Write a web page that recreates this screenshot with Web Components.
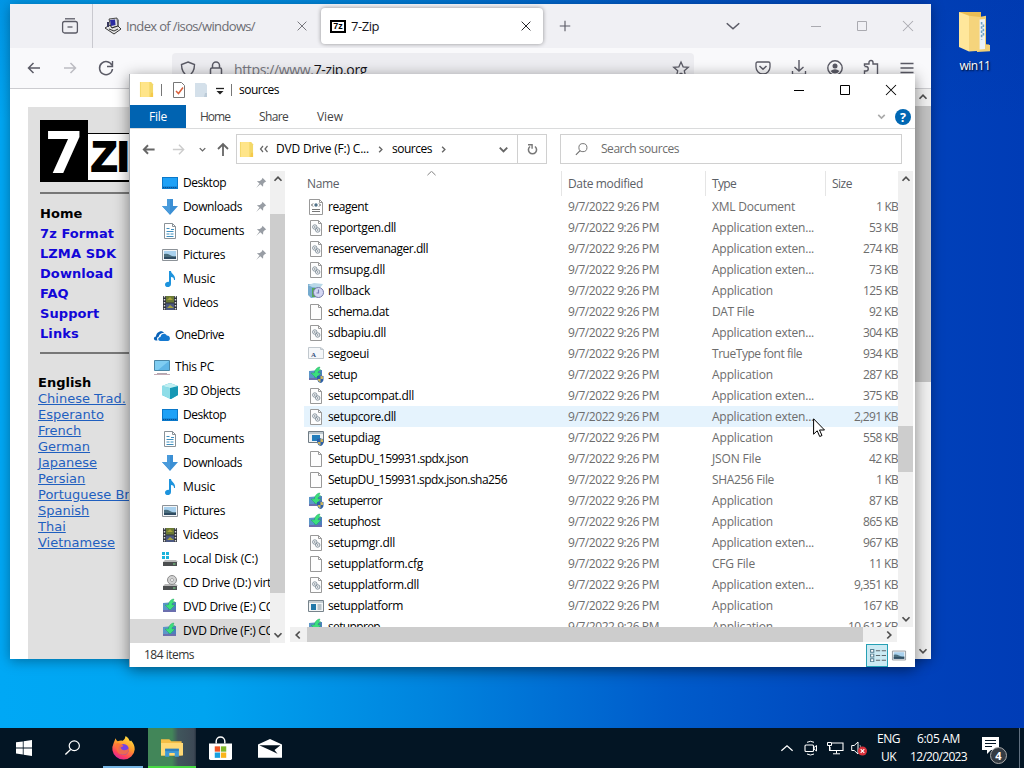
<!DOCTYPE html>
<html lang="en">
<head>
<meta charset="utf-8">
<title>Desktop</title>
<style>
html, body { margin: 0; height: 100%; overflow: hidden; }
body { font: 12px/16px "Open Sans", "Noto Sans", sans-serif; color: #000; }
</style>
</head>
<body>
<win-desktop></win-desktop>

<script>
const folder = `<path d="M1 1h12l2 2v12H1z" fill="#f3d869"/><path d="M2 1h9v14H2z" fill="#ffe58a"/><path d="M13 11h2v4h-3z" fill="#f6c94a"/>`
const page = `<path d="M2.5.5h8l3 3v12h-11z" fill="#fdfdfd" stroke="#999"/><path d="M10.500.5v3h3" fill="none" stroke="#999"/>`
const box = `<path d="M1 4l13-1v9L1 12z" fill="#4d7fbd"/><path d="M1 4h5v8H1z" fill="#5b96c8"/><path d="M1 11h13v2H1z" fill="#6b6fae"/><path d="M8 11L3 6h3.300C7 2.500 9 0 12 0l-1 2.500L13 3c-2 .5-3 1.200-3 3h3z" fill="#3be07d" stroke="#1f9e5c" stroke-width=".4"/>`
const shield = `<path d="M9 9q3 0 3.500-1 .5 1 3 1v3q0 3-3 4-3-1-3.500-4z" fill="#2c5fa8"/><path d="M12.500 8.500q.5.7 2.500 1V12h-2.500zM9.500 12h3v3.500q-2.700-1-3-3.500z" fill="#cdb55c"/>`
const drive = `<path d="M3 9h11l2 2H1z" fill="#b9b9b9"/><path d="M1 11h14v4H1z" fill="#4c4f50"/><path d="M11 13h2.500" stroke="#7ee08c"/>`
const chev = (d, w = 2) => `<path d="${d}" fill="none" stroke="currentColor" stroke-width="${w}"/>`

const ICONS = {
    folder,
    folderFaded: `<path d="M2 1h10l2 2v12H2z" fill="#d4e0ea"/><path d="M12 11h2v4h-3z" fill="#bccbd8"/>`,
    check: `<path d="M2.500.5h8l3 3v12h-11z" fill="#fff" stroke="#777"/><path d="M5 9l2.500 2.500L12 5.500" fill="none" stroke="#d9603b" stroke-width="1.500"/>`,
    qat: `<path d="M4 5.500h8" stroke="#222" stroke-width="1.300"/><path d="M4.500 8h7L8 11.500z" fill="#222"/>`,
    desktop: `<path d="M0 2h16v12H0z" fill="#0b78c9"/><path d="M1 3h14v8.500H1z" fill="#1ea1f7"/><path d="M1 12.500h14" stroke="#0a4f92" stroke-dasharray="1 1"/>`,
    downloads: `<path d="M5 0h6v7h5l-8 9-8-9h5z" fill="#3b8fd4"/><path d="M5 0h3v15L0 7h5z" fill="#4a9bdb"/>`,
    documents: `<path d="M2.500.5h8l3 3v12h-11z" fill="#fff" stroke="#8a9298"/><path d="M10.500.5v3h3" fill="none" stroke="#8a9298"/><path d="M4.500 5.500h3M9 6.500h3M4.500 8.500h7M4.500 11h3M8.500 11h3M4.500 13.500h7" stroke="#3f8fbe"/>`,
    pictures: `<path d="M.5 2.500h15v11H.5z" fill="#f4f6f8" stroke="#8c9298"/><path d="M2 4h12v8H2z" fill="#a9d1ee"/><path d="M2 7q3-1 6 1t6 1v3H2z" fill="#4b6e7e"/><path d="M2 10h12v2H2z" fill="#2e4b62"/>`,
    music: `<path d="M7 0h2c0 3 5 4 4 9h-1c0-2-1-3-3-3v7c0 4-6 4-6 .8C3 11 6 10.500 7 11z" fill="#1d93dd"/>`,
    videos: `<path d="M1 1h14v14H1z" fill="#30343c"/><path d="M4 1h8v6.500H4z" fill="#6b7a35"/><path d="M4 8.500h8V15H4z" fill="#4b5880"/><path d="M5 5l3-3 3 3zM5 13l3-3 4 3z" fill="#a7a33c"/><path d="M2.500 1v14M13.500 1v14" stroke="#dedede" stroke-width="1.400" stroke-dasharray="1.500 1.500"/>`,
    onedrive: `<path d="M2 13.500c-3-.5-2.500-4 0-4C2 5 8 2 10 6c-4 0-5 2-5 3.500-2 .5-2.500 2-1.500 4z" fill="#0a62b8"/><path d="M6.500 14c-3 0-3-4 0-4 .2-3.500 5-4.500 6.300-1.500 4 0 4 5.500 1 5.500z" fill="#1579d0"/>`,
    pc: `<path d="M.5 1.500h15v10H.5z" fill="#7fcdf2" stroke="#4b87a6"/><path d="M15 2v9H4z" fill="#5fb6e6"/><path d="M3 14.500h10" stroke="#b0a7b0"/><path d="M0 15.500h16" stroke="#c3aab4"/>`,
    cube: `<path d="M0 3l8-3 8 3v9l-7 4-9-4z" fill="#39b7cf"/><path d="M0 3l8 2v11l-8-4z" fill="#8edde8"/><path d="M8 5l8-2v9l-7 4H8z" fill="#1697b4"/><path d="M0 3l8-3 8 3-8 2z" fill="#c1eff2"/>`,
    disk: drive + `<path d="M0 1h3v3H0zM4 1h3v3H4zM0 5h3v3H0zM4 5h3v3H4z" fill="#1cb4dc"/>`,
    cd: drive + `<circle cx="10" cy="5" r="4.500" fill="#d2d2d2" stroke="#8c8c8c"/><circle cx="10" cy="5" r="1.500" fill="#fff" stroke="#8c8c8c" stroke-width=".7"/>`,
    box,
    setup: box + shield,
    file: page,
    dll: page + `<g fill="none" stroke="#7d8b96" stroke-width=".9"><circle cx="6.800" cy="7" r="2.200"/><circle cx="6.800" cy="7" r=".5"/><circle cx="9.700" cy="10" r="2.200"/><circle cx="9.700" cy="10" r=".5"/></g>`,
    xml: `<path d="M1.500.5h10l3 3v12h-13z" fill="#fff" stroke="#999"/><path d="M11.500.5v3h3" fill="none" stroke="#999"/><path d="M5 4.500L3.500 6 5 7.500M11 4.500L12.500 6 11 7.500" stroke="#555" fill="none"/><circle cx="8" cy="6" r="1.700" fill="#4f7188"/><path d="M4 10.500h8M4 12.500h8" stroke="#777"/>`,
    rollback: `<path d="M0 1h11v13l-8 1-3-3z" fill="#75aace"/><path d="M4 5h6v9H4z" fill="#58a85a"/><path d="M0 2l6-2 9 1-3 4-8-1z" fill="#b9d8e8"/><circle cx="10.500" cy="9.500" r="5" fill="#d3d7f3" stroke="#777cab"/><path d="M10.500 6.500v3.500H8.500" stroke="#7a80b8" fill="none" stroke-width="1.200"/>`,
    font: `<path d="M.5 1.500h12l3 2v9H.5z" fill="#f5f7f9" stroke="#c1c8ce"/><path d="M12.500 1.500v2h3" fill="none" stroke="#c1c8ce"/><text x="3" y="10.500" font-size="7" font-weight="700" font-family="Liberation Serif, serif" fill="#35507c">A</text>`,
    diag: `<path d="M.5 1.500h15v11H.5z" fill="#eef2f4" stroke="#6f7b84"/><path d="M1 2h14v2H1z" fill="#bcc8cf"/><path d="M4 5h8v6H4z" fill="#237dbb"/>` + shield,
    platform: `<path d="M.5 2.500h15v11H.5z" fill="#f2f5f6" stroke="#77838b"/><path d="M1 3h14v2H1z" fill="#c3ccd1"/><path d="M3 6h5v6H3z" fill="#2077a8"/><path d="M9.500 7h4M9.500 9h4M9.500 11h4" stroke="#81929c"/>`,
    pin: `<path d="M10 1l5 5-1.700.5-2.300 2.500-.3 4L7 9.500 1.500 14.500 6 8.700 2.500 5.500l4-.3L9.300 3z" fill="#989da4"/>`,
    left: `<path d="M14 8H2.500M7.500 3l-5 5 5 5" fill="none" stroke="currentColor" stroke-width="1.500"/>`,
    boldLeft: `<path d="M14.500 8H3M7.500 3.500L3 8l4.500 4.500" fill="none" stroke="currentColor" stroke-width="2"/>`,
    right: `<path d="M2 8h11.500M8.500 3l5 5-5 5" fill="none" stroke="currentColor" stroke-width="1.500"/>`,
    up: `<path d="M8 15V3M3 8l5-5 5 5" fill="none" stroke="currentColor" stroke-width="1.800"/>`,
    chevUp: chev('M4 10l4-4 4 4'),
    chevDown: chev('M4 6l4 4 4-4'),
    listTabs: chev('M3 5.500l5 5 5-5', 1.2),
    chevLeft: chev('M10 4L6 8l4 4'),
    chevRight: chev('M6 4l4 4-4 4'),
    thinUp: chev('M3 10.500L8 6l5 4.500', 1.1),
    dblLeft: `<path d="M7 5L4.500 8 7 11M11.500 5L9 8l2.500 3" fill="none" stroke="currentColor" stroke-width="1.200"/>`,
    refresh: `<path d="M11 4.300A5 5 0 1 1 5 4.300" fill="none" stroke="currentColor" stroke-width="1.900"/><path d="M2.500 2.200h5v5" fill="none" stroke="currentColor" stroke-width="1.700"/>`,
    search: `<circle cx="9.500" cy="6" r="4.300" fill="none" stroke="currentColor"/><path d="M6.500 9.200L2 13.800" stroke="currentColor" stroke-width="1.200"/>`,
    min: `<path d="M3 8.500h10" stroke="currentColor"/>`,
    max: `<path d="M3.500 3.500h9v9h-9z" fill="none" stroke="currentColor"/>`,
    close: `<path d="M3 3l10 10M13 3L3 13" stroke="currentColor" stroke-width="1.050"/>`,
    plus: `<path d="M8 2v12M2 8h12" stroke="currentColor" stroke-width="1.300"/>`,
    help: `<circle cx="8" cy="8" r="8" fill="#0067b3"/><text x="8" y="12.500" text-anchor="middle" font-size="12.500" font-weight="700" fill="#fff">?</text>`,
    recent: `<path d="M3 .8h10" stroke="currentColor" stroke-width="1.300"/><rect x=".6" y="3.500" width="14.800" height="11.500" rx="2" fill="none" stroke="currentColor" stroke-width="1.300"/><path d="M5.500 9h5" stroke="currentColor" stroke-width="1.300"/>`,
    reload: `<path d="M14 5.500A6.500 6.500 0 1 0 14.500 9" fill="none" stroke="currentColor" stroke-width="1.500"/><path d="M14.500 1v5.500H9" fill="none" stroke="currentColor" stroke-width="1.400"/>`,
    guard: `<path d="M8 1l6.500 2.500c0 6-2 9.500-6.500 12-4.500-2.500-6.500-6-6.500-12z" fill="none" stroke="currentColor" stroke-width="1.400"/>`,
    lock: `<path d="M4.500 7V4.500a3.500 3.500 0 0 1 7 0V7" fill="none" stroke="currentColor" stroke-width="1.500"/><rect x="2.500" y="7" width="11" height="8.500" rx="1.500" fill="none" stroke="currentColor" stroke-width="1.500"/>`,
    star: `<path d="M8 1l2.100 4.800 5.200.5-4 3.500 1.200 5.200L8 12.300 3.500 15l1.200-5.200-4-3.500 5.200-.5z" fill="none" stroke="currentColor" stroke-width="1.300"/>`,
    pocket: `<path d="M2.500 2h11q1.500 0 1.500 1.500V7A7 7 0 0 1 1 7V3.500Q1 2 2.500 2z" fill="none" stroke="currentColor" stroke-width="1.300"/><path d="M4.500 6L8 9.300 11.500 6" fill="none" stroke="currentColor" stroke-width="1.500"/>`,
    save: `<path d="M8 0v11M3.500 7L8 11l4.500-4M1.500 11v3.500h13V11" fill="none" stroke="currentColor" stroke-width="1.400"/>`,
    user: `<circle cx="8" cy="8" r="7.200" fill="none" stroke="currentColor" stroke-width="1.400"/><circle cx="8" cy="6" r="2.500" fill="currentColor"/><path d="M3.500 11q4.500-3.500 9 0-2 2.500-4.500 2.500T3.500 11z" fill="currentColor"/>`,
    puzzle: `<path d="M1.500 6V4H6V2.500a2 2 0 0 1 4 0V4h4.500v11M1.500 6.500H3a2 2 0 0 1 0 4.500H1.500v4" fill="none" stroke="currentColor" stroke-width="1.400"/>`,
    menu: `<path d="M1.500 3.500h13M1.500 8h13M1.500 12.500h13" stroke="currentColor" stroke-width="1.300"/>`,
    apache: `<path d="M4 1l8-1 1 8-7 2z" fill="#ddd" stroke="#222" stroke-width=".8"/><path d="M5 2l5-.5.5 5.500L6 8z" fill="#2a2ba0"/><path d="M12 0l2 2v6l-1 1z" fill="#777"/><path d="M0 10l5-3 2 3 6-2 3 3-7 5z" fill="#e3e3e3" stroke="#222" stroke-width=".9"/><path d="M4 11l5 2 4-2" stroke="#333" fill="none"/><path d="M2 4h2v5H2z" fill="#37375c"/>`,
    details: `<path d="M1.500 1.500h3v3h-3zM1.500 6.500h3v3h-3zM1.500 11.500h3v3h-3z" fill="#fff" stroke="#557e91"/><path d="M6.500 3h4M12 3h4M6.500 8h4M12 8h4M6.500 13h4M12 13h4" stroke="#5d666b"/>`,
    start: `<path d="M0 2.300L6.800 1.400v6.100H0zM7.600 1.300L16 0v7.500H7.600zM0 8.400h6.800v6.200L0 13.600zM7.600 8.400H16V16l-8.400-1.200z" fill="#fff"/>`,
    firefox: `<defs><linearGradient id="fx" x1=".8" y1="0" x2=".3" y2="1"><stop stop-color="#ffe844"/><stop offset=".45" stop-color="#ff9a2b"/><stop offset=".8" stop-color="#ff405f"/><stop offset="1" stop-color="#d927a0"/></linearGradient></defs><path d="M1.200 4.500Q2 2.500 2.500 1.500 3 3 4 3.500 6 2.800 7.500 3.200 9 2.500 9.500 0q2 1 3 3.500L13.300 3Q16 6 15.800 9a7.800 7.200 0 0 1-15.500.5Q0 7 1.200 4.500z" fill="url(#fx)"/><circle cx="8" cy="9" r="3.700" fill="#7542e5"/><path d="M3 5q2.500-.5 5 1.500-1 1-2 1 .5 2 2.500 2 2 0 3.500-1.500-.5 5-5 4.500Q3.500 12 3 8z" fill="#ff7139" opacity=".85"/>`,
    explorer: `<path d="M0 1h6l1.500 1.500H15V14H0z" fill="#f5bf45"/><path d="M0 4h16v10H0z" fill="#ffd975"/><path d="M3 9h10v6h-3v-3H6v3H3z" fill="#3f9ad6"/><path d="M3 8.500h10v2H3z" fill="#2d7fbe"/>`,
    store: `<path d="M5 4.500V3a3 3 0 0 1 6 0v1.500" fill="none" stroke="#fff"/><path d="M0 4.500h16V15q0 1-1 1H1q-1 0-1-1z" fill="#fff"/><path d="M4 6.500h3.700v3.700H4z" fill="#ef5425"/><path d="M8.300 6.500H12v3.700H8.300z" fill="#7db728"/><path d="M4 10.800h3.700v3.700H4z" fill="#18a1df"/><path d="M8.300 10.800H12v3.700H8.300z" fill="#fab51c"/>`,
    mail: `<path d="M0 5l8-4.200L16 5v10H0z" fill="#fff"/><path d="M.8 5.500H15L11 9.200l2 2.800-4.500-2.500z" fill="#04131f"/>`,
    meet: `<rect x="2" y="5" width="8.500" height="6.500" rx="1" fill="none" stroke="#fff" stroke-width="1.100"/><path d="M11 7.500l2.500-2v5.500L11 9zM4 2.300q3.500-2 7 0M4 14q3.500 2 7 0" fill="none" stroke="#fff"/>`,
    network: `<path d="M5 3h11v7.500H3V7" fill="none" stroke="#fff" stroke-width="1.100"/><path d="M9.500 10.500v3M6 13.800h7M.5 2.500h4v3h-4zM2.500 5.500V11" fill="none" stroke="#fff"/>`,
    sound: `<path d="M.7 5.500h2.500L7 2v12l-3.800-3.500H.7z" fill="none" stroke="#fff"/><path d="M9 5q1.500 3 0 6" fill="none" stroke="#999"/><circle cx="11.500" cy="11" r="4.500" fill="#d9303a"/><path d="M9.700 9.200l3.600 3.600M13.300 9.200l-3.600 3.600" stroke="#fff" stroke-width="1.100"/>`,
    bigFolder: `<path d="M0 0h11v2h2.500v11H15v2.500h-3L6 15z" fill="#e8bd55"/><path d="M7 2.500l6.500-1V13l2 .2v2.500L9 16z" fill="#f1cf74"/><path d="M0 0l5 1.500v14.300L0 14z" fill="#ffe79b"/><path d="M5 1.500l5.500.5v13.500L5 15.800z" fill="#f5d47c"/><path d="M10.300 3l2.700-.2v12l-2.700.2z" fill="#edf3f6"/><path d="M11.300 4v7M12.200 5v5" stroke="#6ca4c8" stroke-width=".8" stroke-dasharray="1 .7"/>`
}

// inline svg by name
class UiIcon extends HTMLElement {
    constructor() {
        super()
        const w = this.getAttribute('w') || this.getAttribute('size') || 16
        const h = this.getAttribute('h') || this.getAttribute('size') || 16
        this.attachShadow({ mode: 'open' }).innerHTML = `
        <style>
        :host { display: inline-flex; flex: none; }
        svg { display: block; overflow: visible; }
        </style>
        <svg width="${w}" height="${h}" viewBox="0 0 16 16" preserveAspectRatio="none">${ICONS[this.getAttribute('name')]}</svg>`
    }
}

// one line of text, tracked so that it takes up exactly w pixels
class FitText extends HTMLElement {
    constructor() {
        super()
        this.attachShadow({ mode: 'open' }).innerHTML = `
        <style>
        :host { display: inline-block; flex: none; white-space: nowrap; }
        span { display: inline-block; }
        </style>
        <span><slot></slot></span>`
    }
    connectedCallback() {
        const w = Number(this.getAttribute('w'))
        if (!w) return
        const span = this.shadowRoot.querySelector('span')
        const natural = span.getBoundingClientRect().width
        span.style.letterSpacing = (w - natural) / this.textContent.length + 'px'
    }
}

// vertical or horizontal bar, from = thumb offset, len = thumb length
class ScrollBar extends HTMLElement {
    constructor() {
        super()
        const across = this.hasAttribute('across')
        const bg = this.getAttribute('thumb') || '#cdcdcd'
        this.attachShadow({ mode: 'open' }).innerHTML = `
        <style>
        :host { display: flex; flex: none; flex-direction: ${across ? 'row' : 'column'}; align-items: center; background: #f0f0f0; color: #505050; }
        .thumb { flex: none; background: ${bg}; align-self: stretch; ${across ? 'width' : 'height'}: ${this.getAttribute('len')}px; }
        .gap { flex: 0 0 ${this.getAttribute('from')}px; display: flex; align-items: ${across ? 'center' : 'flex-start'}; }
        .rest { flex: 1; display: flex; ${across ? 'justify-content: flex-end; align-items: center' : 'align-items: flex-end'}; }
        ui-icon { margin: 1px; }
        </style>
        <div class="gap"><ui-icon name="${across ? 'chevLeft' : 'chevUp'}" size="14"></ui-icon></div>
        <div class="thumb"></div>
        <div class="rest"><ui-icon name="${across ? 'chevRight' : 'chevDown'}" size="14"></ui-icon></div>`
    }
}

class BrowserTab extends HTMLElement {
    constructor() {
        super()
        this.attachShadow({ mode: 'open' }).innerHTML = `
        <style>
        :host { display: flex; align-items: center; height: 36px; padding: 0 9px; box-sizing: border-box; font-size: 13px; color: #6c6c72; }
        :host([active]) { background: #fff; border-radius: 4px; box-shadow: 0 0 4px rgba(0,0,0,.4); color: #15141a; }
        .label { flex: 1; margin-left: 5px; }
        </style>
        <slot name="icon"></slot>
        <div class="label"><slot></slot></div>
        <ui-icon name="close" size="14"></ui-icon>`
    }
}

class BrowserWindow extends HTMLElement {
    constructor() {
        super()
        const langs = ['Chinese Trad.', 'Esperanto', 'French', 'German', 'Japanese', 'Persian', 'Portuguese Brazil', 'Spanish', 'Thai', 'Vietnamese']
        const menu = ['7z Format', 'LZMA SDK', 'Download', 'FAQ', 'Support', 'Links']
        this.attachShadow({ mode: 'open' }).innerHTML = `
        <style>
        :host { display: flex; flex-direction: column; background: #fff; box-shadow: 0 2px 12px rgba(0,0,0,.35); overflow: hidden; color: #5b5b66; }
        .tabs { display: flex; align-items: center; height: 44px; background: #f0f0f4; }
        .recent { width: 83px; height: 44px; box-sizing: border-box; border-right: 1px solid #c9c9cf; display: flex; align-items: center; justify-content: flex-end; padding-right: 14px; }
        .t1 { width: 225px; margin: 0 2px 0 2px; padding-left: 11px; padding-right: 11px; }
        .t2 { width: 222px; padding-right: 10px; margin-left: -1px; }
        .fav { display: flex; width: 14px; height: 11px; background: #fff; border: 1px solid #000; align-items: center; font: bold 9px/9px "Liberation Sans", sans-serif; color: #000; outline: 1px solid #000; outline-offset: -2px; justify-content: center; }
        .plus { margin-left: 15px; }
        .list { margin-left: 151px; }
        .ctl { display: flex; margin-left: auto; gap: 30px; padding-right: 15px; color: #aaaab0; }
        .nav { display: flex; align-items: center; height: 40px; background: #f9f9fb; border-bottom: 1px solid #ccccd0; padding: 0 16px; }
        .nav > ui-icon + ui-icon { margin-left: 20px; }
        .url { flex: none; width: 522px; height: 34px; margin: 4px 0 0 58px; background: #ededf1; border-radius: 4px; display: flex; align-items: center; font-size: 14px; padding-left: 8px; box-sizing: border-box; color: #77777f; }
        .url ui-icon { color: #5b5b66; margin-bottom: 2px; }
        .url b { font-weight: 400; color: #15141a; }
        .tools { display: flex; gap: 20px; margin-left: auto; }
        .view { display: flex; flex: 1; min-height: 0; }
        .page { flex: 1; padding: 18px 0 0 18px; }
        .side { background: #e0e0e0; height: 100%; padding: 13px 10px 0 12px; box-sizing: border-box; width: 150px; font: 13px/16px "DejaVu Sans", Verdana, sans-serif; letter-spacing: .08px; }
        .logo { display: flex; height: 62px; width: 180px; align-items: flex-end; }
        .seven { width: 48px; height: 62px; background: #000; color: #fff; font: bold 57px/66px "DejaVu Sans", sans-serif; text-align: center; flex: none; }
        .zip { flex: 1; height: 49px; border: 2px solid #000; border-top-width: 1px; border-left: 0; box-sizing: border-box; background: #fff; color: #000; font: bold 43px/44px "Liberation Sans", sans-serif; padding-left: 3px; -webkit-text-stroke: 2px #000; }
        .rule { height: 2px; background: #777; margin: 10px -20px 10px 0; }
        .menu { font-weight: 700; line-height: 20px; color: #1207d8; }
        .menu div:first-child { color: #000; }
        .langs { margin: 21px 0 0 -2px; white-space: nowrap; color: #1f5fbf; }
        .langs b { color: #000; display: block; letter-spacing: 0; }
        .langs div { text-decoration: underline; letter-spacing: 0; }
        scroll-bar { width: 16px; }
        </style>
        <div class="tabs">
            <div class="recent"><ui-icon name="recent" size="16"></ui-icon></div>
            <browser-tab class="t1"><ui-icon slot="icon" name="apache" size="16" style="margin-left:-1px"></ui-icon><fit-text w="129">Index of /isos/windows/</fit-text></browser-tab>
            <browser-tab class="t2" active><div class="fav" slot="icon">7z</div><fit-text w="28">7-Zip</fit-text></browser-tab>
            <ui-icon class="plus" name="plus" size="14"></ui-icon>
            <ui-icon class="list" name="listTabs" w="20" h="18"></ui-icon>
            <div class="ctl"><ui-icon name="min" size="16"></ui-icon><ui-icon name="max" size="16"></ui-icon><ui-icon name="close" size="16"></ui-icon></div>
        </div>
        <div class="nav">
            <ui-icon name="left"></ui-icon><ui-icon name="right" style="color:#bcbcc2"></ui-icon><ui-icon name="reload"></ui-icon>
            <div class="url">
                <ui-icon name="guard"></ui-icon><ui-icon name="lock" style="margin:0 10px 2px 12px" ></ui-icon>
                <fit-text w="133">https://www.<b>7-zip.org</b></fit-text>
                <ui-icon name="star" style="margin-left:auto;margin-right:5px"></ui-icon>
            </div>
            <div class="tools"><ui-icon name="pocket"></ui-icon><ui-icon name="save"></ui-icon><ui-icon name="user"></ui-icon><ui-icon name="puzzle"></ui-icon><ui-icon name="menu"></ui-icon></div>
        </div>
        <div class="view">
            <div class="page"><div class="side">
                <div class="logo"><div class="seven">7</div><div class="zip">ZIP</div></div>
                <div class="rule"></div>
                <div class="menu"><div>Home</div>${menu.map(m => `<div>${m}</div>`).join('')}</div>
                <div class="rule" style="margin-top:8px"></div>
                <div class="langs"><b>English</b>${langs.map(l => `<div>${l}</div>`).join('')}</div>
            </div></div>
            <scroll-bar from="17" len="276" thumb="#c2c2c2"></scroll-bar>
        </div>`
    }
}

class TreeItem extends HTMLElement {
    constructor() {
        super()
        this.attachShadow({ mode: 'open' }).innerHTML = `
        <style>
        :host { display: flex; align-items: center; height: 24px; padding-left: 32px; white-space: nowrap; overflow: hidden; }
        :host([root]) { padding-left: 24px; margin-top: 8px; }
        :host([selected]) { background: #d9d9d9; }
        .label { flex: 1; margin-left: 5px; overflow: hidden; }
        </style>
        <ui-icon name="${this.getAttribute('icon')}"></ui-icon>
        <div class="label"><slot></slot></div>
        ${this.hasAttribute('pinned') ? '<ui-icon name="pin" size="12" style="margin-right:3px"></ui-icon>' : ''}`
    }
}

class FileRow extends HTMLElement {
    constructor() {
        super()
        this.attachShadow({ mode: 'open' }).innerHTML = `
        <style>
        :host { display: grid; grid-template-columns: 257px 144px 120px 73px; height: 21px; align-items: center; color: #6d6d6d; white-space: nowrap; }
        :host([hover]) { background: #e5f3fd; }
        .name { display: flex; gap: 4px; padding-left: 4px; color: #000; }
        .cell { padding-left: 7px; }
        .size { text-align: right; }
        </style>
        <div class="name"><ui-icon name="${this.getAttribute('icon')}"></ui-icon><slot name="name"></slot></div>
        <div class="cell"><slot name="date"></slot></div>
        <div class="cell"><slot name="type"></slot></div>
        <div class="size"><slot name="size"></slot></div>`
    }
}

const TYPES = { x: ['Application exten...', 102], a: ['Application', 61], xml: ['XML Document', 83], dat: ['DAT File', 42], ttf: ['TrueType font file', 90], json: ['JSON File', 49], sha: ['SHA256 File', 62], cfg: ['CFG File', 43] }
// icon, name, name width, type, size
const FILES = [
    ['xml', 'reagent', 40, 'xml', '1'],
    ['dll', 'reportgen.dll', 68, 'x', '53'],
    ['dll', 'reservemanager.dll', 100, 'x', '274'],
    ['dll', 'rmsupg.dll', 57, 'x', '73'],
    ['rollback', 'rollback', 42, 'a', '125'],
    ['file', 'schema.dat', 61, 'dat', '92'],
    ['dll', 'sdbapiu.dll', 58, 'x', '304'],
    ['font', 'segoeui', 41, 'ttf', '934'],
    ['setup', 'setup', 29, 'a', '287'],
    ['dll', 'setupcompat.dll', 86, 'x', '375'],
    ['dll', 'setupcore.dll', 68, 'x', '2,291'],
    ['diag', 'setupdiag', 52, 'a', '558'],
    ['file', 'SetupDU_159931.spdx.json', 140, 'json', '42'],
    ['file', 'SetupDU_159931.spdx.json.sha256', 179, 'sha', '1'],
    ['setup', 'setuperror', 54, 'a', '87'],
    ['box', 'setuphost', 52, 'a', '865'],
    ['dll', 'setupmgr.dll', 67, 'x', '967'],
    ['file', 'setupplatform.cfg', 95, 'cfg', '11'],
    ['dll', 'setupplatform.dll', 91, 'x', '9,351'],
    ['platform', 'setupplatform', 75, 'a', '167'],
    ['box', 'setupprep', 52, 'a', '10,613']
]
// text width by number of characters in the size
const SIZE_W = { 1: 22, 2: 29, 3: 35, 5: 44, 6: 50 }

class ExplorerWindow extends HTMLElement {
    constructor() {
        super()
        const rows = FILES.map(([icon, name, w, type, size]) => `
            <file-row icon="${icon}" ${name === 'setupcore.dll' ? 'hover' : ''}>
                <fit-text slot="name" w="${w}">${name}</fit-text>
                <fit-text slot="date" w="91">9/7/2022 9:26 PM</fit-text>
                <fit-text slot="type" w="${TYPES[type][1]}">${TYPES[type][0]}</fit-text>
                <fit-text slot="size" w="${SIZE_W[size.length]}">${size} KB</fit-text>
            </file-row>`).join('')
        this.attachShadow({ mode: 'open' }).innerHTML = `
        <style>
        :host { display: flex; flex-direction: column; background: #fff; border-left: 1px solid #a9acb0; box-shadow: 0 3px 14px rgba(0,0,0,.45); box-sizing: border-box; overflow: hidden; }
        .title { display: flex; align-items: center; height: 31px; padding-left: 9px; box-sizing: border-box; }
        .title i { width: 1px; height: 12px; background: #777; }
        .ctl { margin-left: auto; display: flex; gap: 30px; padding-right: 16px; }
        .ribbon { display: flex; height: 23px; border-bottom: 1px solid #dadbdc; align-items: center; color: #444; }
        .ribbon .file { background: #0063b1; color: #fff; width: 56px; height: 23px; display: flex; align-items: center; justify-content: center; margin-right: 14px; }
        .ribbon fit-text + fit-text { margin-left: 29px; }
        .addr { display: flex; height: 42px; padding-top: 5px; box-sizing: border-box; color: #666; }
        .addr .nav { display: flex; align-items: center; height: 30px; width: 106px; }
        .field { display: flex; align-items: center; height: 30px; border: 1px solid #d0d0d0; box-sizing: border-box; }
        .path { width: 282px; color: #000; padding-left: 2px; }
        .path ui-icon { color: #666; }
        .reload { width: 30px; margin-left: -1px; justify-content: center; color: #777; }
        .find { width: 342px; margin-left: 13px; padding-left: 13px; color: #6d6d6d; }
        .body { display: flex; height: 472px; }
        .tree { width: 140px; height: 472px; overflow: hidden; }
        .list { width: 613px; padding-left: 5px; box-sizing: border-box; flex: none; }
        .pane { padding-left: 14px; height: 456px; overflow: hidden; box-sizing: border-box; }
        .head { display: grid; grid-template-columns: 257px 144px 120px 73px; height: 25px; color: #5b6066; position: relative; }
        .head div { padding: 5px 0 0 6px; border-left: 1px solid #e5e5e5; }
        .head div:first-child { padding-left: 3px; border: 0; }
        .sort { position: absolute; left: 121px; top: -5px; color: #777; }
        .status { display: flex; align-items: center; height: 24px; padding: 0 9px 0 14px; color: #333; }
        .mode { margin-left: auto; width: 22px; height: 23px; border: 1px solid #26a0b5; background: #cbeaf3; box-sizing: border-box; display: flex; align-items: center; justify-content: center; margin-right: 4px; }
        </style>
        <div class="title">
            <ui-icon name="folder" w="15" h="17"></ui-icon><i style="margin:0 9px 0 7px"></i>
            <ui-icon name="check"></ui-icon><ui-icon name="folderFaded" style="margin-left:6px"></ui-icon><ui-icon name="qat" style="margin:2px 3px 0 3px"></ui-icon>
            <i style="margin-right:7px"></i><fit-text w="40">sources</fit-text>
            <div class="ctl"><ui-icon name="min"></ui-icon><ui-icon name="max"></ui-icon><ui-icon name="close"></ui-icon></div>
        </div>
        <div class="ribbon">
            <div class="file"><fit-text w="18">File</fit-text></div>
            <fit-text w="30">Home</fit-text><fit-text w="29">Share</fit-text><fit-text w="26">View</fit-text>
            <ui-icon name="chevDown" size="13" style="margin-left:auto;margin-right:7px;color:#aaa"></ui-icon><ui-icon name="help" style="margin-right:4px"></ui-icon>
        </div>
        <div class="addr">
            <div class="nav"><ui-icon name="boldLeft" size="15" style="margin-left:11px"></ui-icon><ui-icon name="right" size="15" style="margin-left:15px;color:#ccc"></ui-icon><ui-icon name="chevDown" size="11" style="margin-left:11px"></ui-icon><ui-icon name="up" size="16" style="margin-left:7px"></ui-icon></div>
            <div class="field path">
                <ui-icon name="folder" w="15" h="17"></ui-icon><ui-icon name="dblLeft" style="margin:0 4px 0 2px"></ui-icon>
                <fit-text w="93">DVD Drive (F:) C...</fit-text><ui-icon name="chevRight" size="11" style="margin:0 6px"></ui-icon>
                <fit-text w="40">sources</fit-text><ui-icon name="chevRight" size="11" style="margin:0 6px"></ui-icon>
                <ui-icon name="chevDown" size="15" style="margin-left:auto;margin-right:6px"></ui-icon>
            </div>
            <div class="field reload"><ui-icon name="refresh" size="13"></ui-icon></div>
            <div class="field find"><ui-icon name="search" size="15"></ui-icon><fit-text w="78" style="margin-left:12px">Search sources</fit-text></div>
        </div>
        <div class="body">
            <div class="tree">
                <tree-item icon="desktop" pinned><fit-text w="43">Desktop</fit-text></tree-item>
                <tree-item icon="downloads" pinned><fit-text w="59">Downloads</fit-text></tree-item>
                <tree-item icon="documents" pinned><fit-text w="61">Documents</fit-text></tree-item>
                <tree-item icon="pictures" pinned><fit-text w="42">Pictures</fit-text></tree-item>
                <tree-item icon="music"><fit-text w="32">Music</fit-text></tree-item>
                <tree-item icon="videos"><fit-text w="35">Videos</fit-text></tree-item>
                <tree-item icon="onedrive" root><fit-text w="49">OneDrive</fit-text></tree-item>
                <tree-item icon="pc" root><fit-text w="39">This PC</fit-text></tree-item>
                <tree-item icon="cube"><fit-text w="57">3D Objects</fit-text></tree-item>
                <tree-item icon="desktop"><fit-text w="43">Desktop</fit-text></tree-item>
                <tree-item icon="documents"><fit-text w="61">Documents</fit-text></tree-item>
                <tree-item icon="downloads"><fit-text w="59">Downloads</fit-text></tree-item>
                <tree-item icon="music"><fit-text w="32">Music</fit-text></tree-item>
                <tree-item icon="pictures"><fit-text w="42">Pictures</fit-text></tree-item>
                <tree-item icon="videos"><fit-text w="35">Videos</fit-text></tree-item>
                <tree-item icon="disk"><fit-text w="75">Local Disk (C:)</fit-text></tree-item>
                <tree-item icon="cd"><fit-text w="98">CD Drive (D:) virtio</fit-text></tree-item>
                <tree-item icon="box"><fit-text w="124">DVD Drive (E:) CCCOMA</fit-text></tree-item>
                <tree-item icon="box" selected><fit-text w="124">DVD Drive (F:) CCCOMA</fit-text></tree-item>
            </div>
            <scroll-bar style="width:15px" from="43" len="379"></scroll-bar>
            <div class="list">
                <div class="pane">
                    <div class="head">
                        <div><fit-text w="32">Name</fit-text></div><div><fit-text w="75">Date modified</fit-text></div><div><fit-text w="24">Type</fit-text></div><div><fit-text w="20">Size</fit-text></div>
                        <ui-icon class="sort" name="thinUp" w="13" h="14"></ui-icon>
                    </div>
                    ${rows}
                </div>
                <scroll-bar across style="height:15px;width:607px" from="17" len="556"></scroll-bar>
            </div>
            <scroll-bar style="width:15px;height:456px" from="255" len="46"></scroll-bar>
        </div>
        <div class="status"><fit-text w="50">184 items</fit-text><div class="mode"><ui-icon name="details" w="17" h="15"></ui-icon></div><ui-icon name="pictures" w="14" h="13"></ui-icon></div>`
    }
}

class TaskBar extends HTMLElement {
    constructor() {
        super()
        this.attachShadow({ mode: 'open' }).innerHTML = `
        <style>
        :host { display: flex; height: 40px; background: #031524; color: #fff; align-items: center; }
        .btn { width: 48px; height: 40px; display: flex; align-items: center; justify-content: center; box-sizing: border-box; margin-right: 1px; }
        .run { box-shadow: inset 0 -2px #76b5e5; width: 40px; margin: 0 5px 0 6px; }
        .open { background: linear-gradient(90deg, #428659 0 24px, #40565c 30px, #3d4956 46px, #26323f); box-shadow: inset 0 -2px #47d944; margin-right: 0; }
        .tray { display: flex; align-items: center; margin-left: auto; height: 40px; }
        .two { text-align: center; line-height: 18px; display: flex; flex-direction: column; align-items: center; }
        .note { position: relative; width: 24px; height: 24px; margin: 2px 13px 0 15px; }
        .count { position: absolute; right: -1px; bottom: -3px; width: 15px; height: 15px; border: 1px solid #aaa; border-radius: 50%; background: #343b43; text-align: center; font: 700 11px/15px "Open Sans", sans-serif; }
        .edge { width: 1px; height: 40px; background: #617080; margin-right: 4px; }
        </style>
        <div class="btn" style="margin-right:0"><ui-icon name="start"></ui-icon></div>
        <div class="btn"><ui-icon name="search" w="19" h="18"></ui-icon></div>
        <div class="btn run"><ui-icon name="firefox" w="23" h="24"></ui-icon></div>
        <div class="btn open"><ui-icon name="explorer" w="22" h="20"></ui-icon></div>
        <div class="btn"><ui-icon name="store" w="23" h="23"></ui-icon></div>
        <div class="btn" style="padding-left:2px"><ui-icon name="mail" w="24" h="21"></ui-icon></div>
        <div class="tray">
            <ui-icon name="thinUp" w="18" h="18"></ui-icon>
            <ui-icon name="meet" w="16" h="16" style="margin-left:7px"></ui-icon>
            <ui-icon name="network" w="16" h="16" style="margin-left:8px"></ui-icon>
            <ui-icon name="sound" w="16" h="16" style="margin-left:8px"></ui-icon>
            <div class="two" style="margin-left:10px"><fit-text w="23">ENG</fit-text><fit-text w="15">UK</fit-text></div>
            <div class="two" style="margin-left:10px"><fit-text w="43">6:05 AM</fit-text><fit-text w="57">12/20/2023</fit-text></div>
            <div class="note"><svg width="17" height="18" viewBox="0 0 17 18"><path d="M0 0h17v13H9l-4 4v-4H0z" fill="#fff"/><path d="M3 3.500h11M3 6.500h11M3 9.500h7" stroke="#031524"/></svg><div class="count">4</div></div>
            <div class="edge"></div>
        </div>`
    }
}

class WinDesktop extends HTMLElement {
    constructor() {
        super()
        this.attachShadow({ mode: 'open' }).innerHTML = `
        <style>
        :host { display: flex; flex-direction: column; justify-content: flex-end; position: relative; width: 1024px; height: 768px; overflow: hidden;
            background: linear-gradient(180deg, rgba(0,50,150,.15), transparent 120px), linear-gradient(90deg, #00a8f5 0, #00a4f0 20%, #0084de 42%, #005ccb 65%, #0042bb 88%, #003cb6 100%); }
        browser-window { position: absolute; left: 10px; top: 4px; width: 921px; height: 655px; }
        explorer-window { position: absolute; left: 129px; top: 74px; width: 786px; height: 593px; }
        .shortcut { position: absolute; left: 950px; top: 12px; width: 50px; display: flex; flex-direction: column; align-items: center; gap: 6px; color: #fff; text-shadow: 1px 1px 2px #000; }
        .cursor { position: absolute; left: 813px; top: 418px; }
        </style>
        <div class="shortcut"><ui-icon name="bigFolder" w="32" h="40"></ui-icon><fit-text w="31">win11</fit-text></div>
        <browser-window></browser-window>
        <explorer-window></explorer-window>
        <svg class="cursor" width="13" height="20" viewBox="0 0 13 20"><path d="M.6.800v15.400l3.600-3.400 2.500 5.700 2.300-1-2.500-5.500h5z" fill="#fff" stroke="#000"/></svg>
        <task-bar></task-bar>`
    }
}

window.customElements.define('win-desktop', WinDesktop)
window.customElements.define('browser-window', BrowserWindow)
window.customElements.define('browser-tab', BrowserTab)
window.customElements.define('explorer-window', ExplorerWindow)
window.customElements.define('tree-item', TreeItem)
window.customElements.define('file-row', FileRow)
window.customElements.define('scroll-bar', ScrollBar)
window.customElements.define('task-bar', TaskBar)
window.customElements.define('ui-icon', UiIcon)
// last, it measures text inside the finished layout
window.customElements.define('fit-text', FitText)
</script>
</body>
</html>
